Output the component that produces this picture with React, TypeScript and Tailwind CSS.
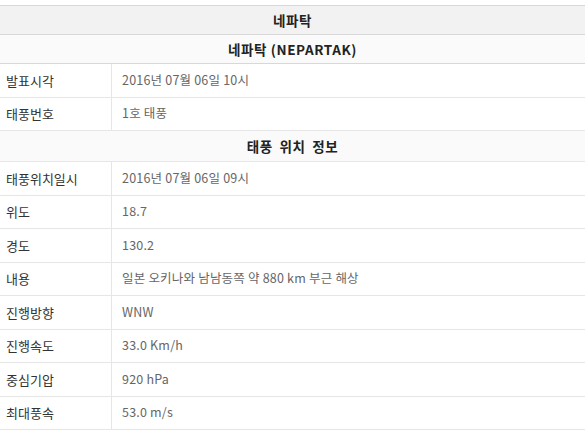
const font = "font-['Noto_Sans_CJK_KR','Noto_Sans',sans-serif]"

interface Row {
  label: string
  value: string
}

const infoRows: Row[] = [
  { label: "발표시각", value: "2016년 07월 06일 10시" },
  { label: "태풍번호", value: "1호 태풍" },
]

const positionRows: Row[] = [
  { label: "태풍위치일시", value: "2016년 07월 06일 09시" },
  { label: "위도", value: "18.7" },
  { label: "경도", value: "130.2" },
  { label: "내용", value: "일본 오키나와 남남동쪽 약 880 km 부근 해상" },
  { label: "진행방향", value: "WNW" },
  { label: "진행속도", value: "33.0 Km/h" },
  { label: "중심기압", value: "920 hPa" },
  { label: "최대풍속", value: "53.0 m/s" },
]

function HeadRow({ title, top }: { title: string; top?: boolean }) {
  return (
    <div
      className={
        "flex h-[29px] items-center justify-center border-b border-[#d8d8d8] text-[13.5px] font-bold tracking-[0.6px] text-[#222] " +
        (top ? "bg-[#f2f2f2]" : "bg-[#fafafa]")
      }
    >
      {title}
    </div>
  )
}

function DataRow({ row }: { row: Row }) {
  return (
    <div className="flex h-[33.5px] border-b border-[#e6e6e6]">
      <div className="flex w-[112px] shrink-0 items-center border-r border-[#e6e6e6] pl-[6px] text-[13px] text-[#333]">
        {row.label}
      </div>
      <div className="flex items-center pl-[10px] text-[12.5px] tracking-[0.2px] text-[#666]">{row.value}</div>
    </div>
  )
}

export default function App() {
  return (
    <div className={"h-[445px] w-[585px] overflow-hidden bg-white pt-[5px] " + font}>
      <div className="border-t border-[#d8d8d8]">
        <HeadRow title="네파탁" top />
        <HeadRow title="네파탁 (NEPARTAK)" />
        {infoRows.map((r) => (
          <DataRow key={r.label} row={r} />
        ))}
        <div className="flex h-[31px] items-center justify-center border-b border-[#e6e6e6] bg-[#fafafa] text-[13.5px] font-bold tracking-[0.6px] text-[#222] [word-spacing:3px]">
          태풍 위치 정보
        </div>
        {positionRows.map((r) => (
          <DataRow key={r.label} row={r} />
        ))}
      </div>
    </div>
  )
}
